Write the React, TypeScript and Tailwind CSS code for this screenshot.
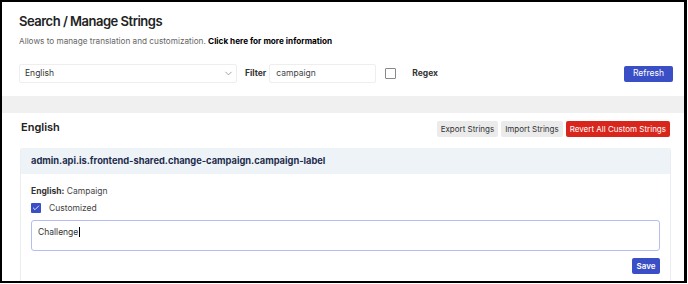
import React from "react";
import { ChevronDown, Check } from "lucide-react";

function App() {
  return (
    <div className="h-[284px] w-[688px] overflow-hidden bg-white font-['Inter','Noto_Sans',sans-serif]">
      <div className="h-[283px] w-[687px] overflow-hidden border-2 border-r-[3px] border-black">
        {/* header */}
        <div className="pl-[17px] pr-[11px] pt-[9px]">
          <h1 className="text-[13px] font-semibold leading-[20px] tracking-[-0.5px] text-[#222]">Search / Manage Strings</h1>
          <p className="mt-[4px] text-[8.2px] leading-[12px] text-[#666]">
            Allows to manage translation and customization.{" "}
            <span className="font-bold text-black">Click here for more information</span>
          </p>
          <div className="mt-[17px] flex items-center">
            <div className="flex h-[19px] w-[218px] items-center justify-between rounded-[2px] border border-[#eee] pl-[5px] pr-[2px] text-[8.5px] text-[#333]">
              <span>English</span>
              <ChevronDown className="h-[11px] w-[11px] text-[#777]" strokeWidth={1.5} />
            </div>
            <span className="ml-[8px] text-[8.5px] font-bold text-[#333]">Filter</span>
            <div className="ml-[3px] flex h-[19px] w-[107px] items-center rounded-[2px] border border-[#eee] pl-[6px] text-[8.5px] text-[#444]">
              campaign
            </div>
            <div className="ml-[9px] h-[11px] w-[11px] rounded-[1px] border border-[#888]"></div>
            <span className="ml-[16px] text-[8.5px] font-bold text-[#333]">Regex</span>
            <button className="ml-auto h-[16px] w-[49px] rounded-[2px] bg-[#3a4fc6] text-[8.5px] text-white">
              Refresh
            </button>
          </div>
        </div>
        {/* band */}
        <div className="mt-[13px] h-[17px] bg-[#f0f0f0]"></div>
        {/* content */}
        <div className="pl-[18px] pr-[13px] pt-[8px]">
          <div className="flex items-center justify-between pr-[1px]">
            <h2 className="-mt-[3px] pl-[1px] text-[11px] font-semibold text-[#222]">English</h2>
            <div className="flex gap-[3px]">
              <button className="h-[16px] rounded-[2px] bg-[#ebebeb] px-[4px] text-[8px] text-[#333]">Export Strings</button>
              <button className="h-[16px] rounded-[2px] bg-[#ebebeb] px-[4px] text-[8px] text-[#333]">Import Strings</button>
              <button className="h-[16px] rounded-[2px] bg-[#d9261c] px-[4px] text-[8px] text-white">Revert All Custom Strings</button>
            </div>
          </div>
          <div className="mt-[11px] rounded-t-[3px] border-x border-[#eaeef2]">
            <div className="flex h-[26px] items-center bg-[#eef3f8] px-[10px] text-[9.3px] font-bold text-[#1d2b4c]">
              admin.api.is.frontend-shared.change-campaign.campaign-label
            </div>
            <div className="px-[10px] pt-[11px] pb-[10px]">
              <p className="text-[8.5px] text-[#444]">
                <span className="font-bold text-[#333]">English:</span> Campaign
              </p>
              <label className="mt-[4px] flex items-center">
                <span className="flex h-[10px] w-[10px] items-center justify-center rounded-[1px] bg-[#3a4fc6]">
                  <Check className="h-[8px] w-[8px] text-white" strokeWidth={2.5} />
                </span>
                <span className="ml-[8px] text-[8.5px] text-[#444]">Customized</span>
              </label>
              <div className="mt-[5px] h-[31px] rounded-[3px] border-[1.5px] border-[#b5bdf2] px-[6px] pt-[4px] text-[8.5px] text-[#333]">
                Challenge<span className="ml-[1px] inline-block h-[10px] w-[1px] translate-y-[2px] bg-black"></span>
              </div>
              <div className="mt-[7px] flex justify-end">
                <button className="h-[16px] w-[28px] rounded-[2px] bg-[#3a4fc6] text-[8px] font-semibold text-white">Save</button>
              </div>
            </div>
          </div>
        </div>
      </div>
    </div>
  );
}

export default App;
